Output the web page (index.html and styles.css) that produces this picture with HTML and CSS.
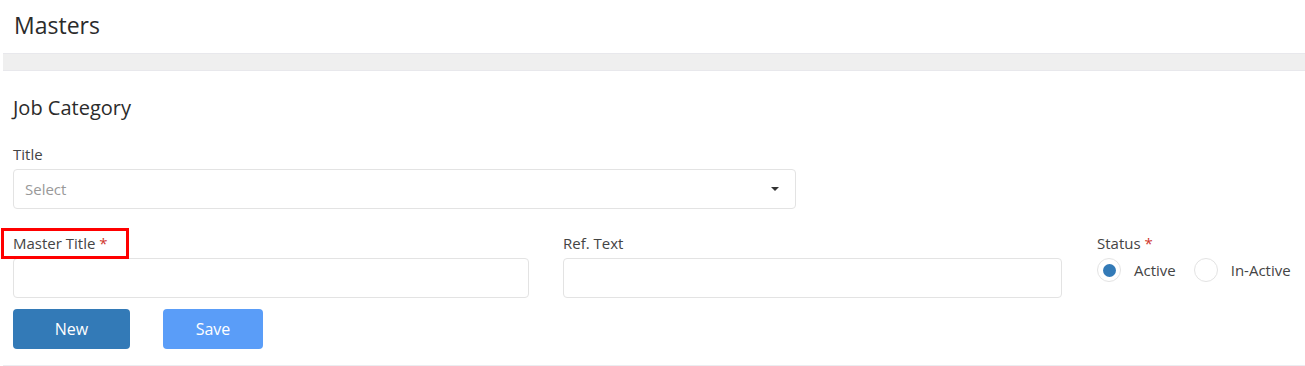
FILE: index.html
```html
<!DOCTYPE html>
<html lang="en">
<head>
    <meta charset="UTF-8">
    <meta name="viewport" content="width=device-width, initial-scale=1.0">
    <title>Masters</title>
    <link rel="stylesheet" href="styles.css">
</head>
<body>

    <div class="page-header">
        <h1>Masters</h1>
    </div>
    <div class="bar"></div>

    <div class="panel">
        <h2>Job Category</h2>

        <label class="field-label">Title</label>
        <div class="select-box">
            <span class="placeholder">Select</span>
            <span class="caret"></span>
        </div>

        <div class="form-row">
            <div class="col">
                <label class="field-label marked">Master Title <span class="req">*</span></label>
                <input type="text" class="text-input">
            </div>
            <div class="col">
                <label class="field-label">Ref. Text</label>
                <input type="text" class="text-input">
            </div>
            <div class="col">
                <label class="field-label">Status <span class="req">*</span></label>
                <div class="radio-group">
                    <label class="radio"><span class="circle checked"></span>Active</label>
                    <label class="radio"><span class="circle"></span>In-Active</label>
                </div>
            </div>
        </div>

        <div class="buttons">
            <button class="btn btn-new">New</button>
            <button class="btn btn-save">Save</button>
        </div>
    </div>

</body>
</html>
```

FILE: styles.css
```css
body {
    margin: 0;
    font-family: "Open Sans", Lato, sans-serif;
    color: #333;
    background: #fff;
}
.page-header {
    height: 53px;
    padding: 12px 14px 0;
    box-sizing: border-box;
}
h1 {
    margin: 0;
    font-size: 23px;
    font-weight: 400;
    line-height: 26px;
    color: #2b2b2b;
}
.bar {
    margin-left: 3px;
    height: 18px;
    box-sizing: border-box;
    background-color: #efefef;
    border-top: 1px solid #e8e8ec;
    border-bottom: 1px solid #e8e8ec;
}
.panel {
    margin-left: 3px;
    padding: 24px 10px 16px;
    border-bottom: 2px solid #ececf0;
}
h2 {
    margin: 0 0 23px;
    font-size: 20px;
    font-weight: 400;
    line-height: 26px;
    color: #2b2b2b;
}
.field-label {
    display: block;
    font-size: 15px;
    line-height: 20px;
    color: #444;
    margin-bottom: 5px;
}
.req {
    color: #d0342c;
}
.marked {
    position: relative;
    width: max-content;
}
.marked::after {
    content: "";
    position: absolute;
    left: -12px;
    top: -5px;
    width: 128px;
    height: 31px;
    border: 3px solid #ff0000;
    box-sizing: border-box;
}
.select-box {
    width: 783px;
    height: 40px;
    box-sizing: border-box;
    border: 1px solid #e3e3e3;
    border-radius: 4px;
    display: flex;
    align-items: center;
    justify-content: space-between;
    padding: 0 16px 0 11px;
}
.placeholder {
    font-size: 15px;
    color: #999;
}
.caret {
    width: 0;
    height: 0;
    border-top: 4px solid #333;
    border-left: 4px solid transparent;
    border-right: 4px solid transparent;
}
.form-row {
    display: grid;
    grid-template-columns: 516px 500px 1fr;
    column-gap: 34px;
    margin-top: 24px;
}
.text-input {
    display: block;
    width: 100%;
    height: 40px;
    box-sizing: border-box;
    border: 1px solid #e3e3e3;
    border-radius: 4px;
    font-size: 14px;
    padding: 0 10px;
}
.col:nth-child(2) .text-input {
    width: 499px;
}
.radio-group {
    display: flex;
    align-items: center;
    gap: 18px;
    margin-top: 1px;
}
.radio {
    display: flex;
    align-items: center;
    gap: 13px;
    font-size: 15px;
    color: #444;
}
.circle {
    width: 24px;
    height: 24px;
    box-sizing: border-box;
    border: 1px solid #e3e3e3;
    border-radius: 50%;
    display: flex;
    align-items: center;
    justify-content: center;
}
.circle.checked::before {
    content: "";
    width: 13px;
    height: 13px;
    border-radius: 50%;
    background-color: #337ab7;
}
.buttons {
    display: flex;
    gap: 33px;
    margin-top: 11px;
}
.btn {
    height: 40px;
    border: none;
    border-radius: 4px;
    color: white;
    font-family: inherit;
    font-size: 16px;
    cursor: pointer;
}
.btn-new {
    width: 117px;
    background-color: #337ab7;
}
.btn-save {
    width: 100px;
    background-color: #5a9df8;
}
```
